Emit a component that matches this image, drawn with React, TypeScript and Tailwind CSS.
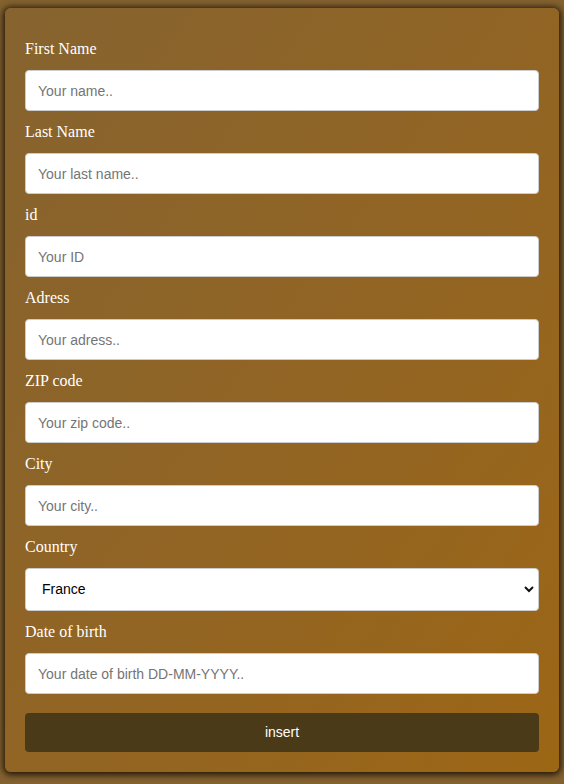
const fields = [
  { label: 'First Name', placeholder: 'Your name..' },
  { label: 'Last Name', placeholder: 'Your last name..' },
  { label: 'id', placeholder: 'Your ID' },
  { label: 'Adress', placeholder: 'Your adress..' },
  { label: 'ZIP code', placeholder: 'Your zip code..' },
  { label: 'City', placeholder: 'Your city..' },
];

const inputClass =
  "block w-full h-[41px] mt-[11px] px-[12px] rounded-[4px] border border-[#ccc] bg-white text-[14px] text-black placeholder:text-[#757575] outline-none font-['Liberation_Sans',Arial,sans-serif]";

const App = () => {
  return (
    <div className="min-h-[784px] w-full bg-[#846230] pt-[8px] px-[5px] pb-[13px]">
      <form className="rounded-[6px] bg-gradient-to-br from-[#86632f] to-[#9c6614] px-[20px] pt-[31px] pb-[20px] shadow-[0_1px_6px_2px_rgba(20,10,0,0.85)] font-['Liberation_Serif','Times_New_Roman',serif] text-white">
        {fields.map((f, i) => (
          <div key={f.label} className={i === 0 ? '' : 'mt-[11px]'}>
            <label className="block text-[16px] leading-[20px]">{f.label}</label>
            <input type="text" placeholder={f.placeholder} className={inputClass} />
          </div>
        ))}

        {/* Country */}
        <div className="mt-[11px]">
          <label className="block text-[16px] leading-[20px]">Country</label>
          <div className="relative mt-[11px]">
            <select className="block w-full h-[43px] appearance-none pl-[16px] pr-8 rounded-[4px] border border-[#ccc] bg-white text-[14px] text-black outline-none font-['Liberation_Sans',Arial,sans-serif]">
              <option>France</option>
              <option>Germany</option>
              <option>Spain</option>
            </select>
            <svg
              className="pointer-events-none absolute right-[5px] top-[17px]"
              width="10"
              height="8"
              viewBox="0 0 10 8"
            >
              <path d="M1 2l4 4 4-4" fill="none" stroke="#111" strokeWidth="2" />
            </svg>
          </div>
        </div>

        {/* Date of birth */}
        <div className="mt-[11px]">
          <label className="block text-[16px] leading-[20px]">Date of birth</label>
          <input type="text" placeholder="Your date of birth DD-MM-YYYY.." className={inputClass} />
        </div>

        <button
          type="submit"
          className="mt-[19px] w-full h-[39px] rounded-[4px] bg-[#4b3a18] text-white text-[14px] font-['Liberation_Sans',Arial,sans-serif]"
        >
          insert
        </button>
      </form>
    </div>
  );
};

export default App;
